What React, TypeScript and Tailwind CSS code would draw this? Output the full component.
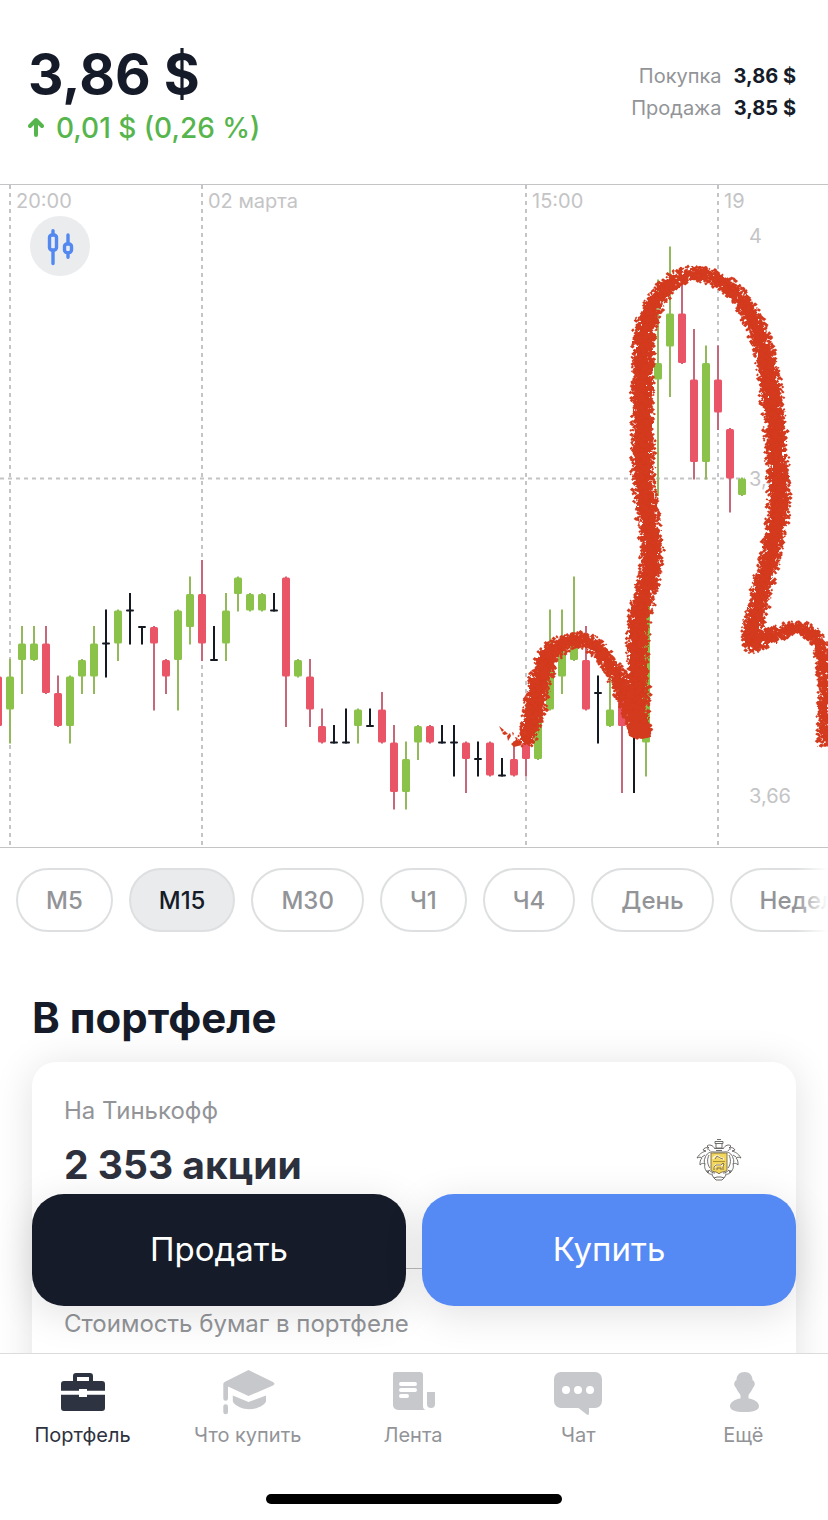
import React from 'react';

type Tone = 'up' | 'down' | 'flat';

interface Candle {
  tone: Tone;
  high: number;
  open: number;
  close: number;
  low: number;
}

// Levels are counted in cents below 4,00 $
const CANDLES: Candle[] = (
  [
    ['down', 27, 27, 30, 30],
    ['up', 26, 27, 29, 31],
    ['up', 24, 25, 26, 28],
    ['up', 24, 25, 26, 26],
    ['down', 24, 25, 28, 28],
    ['down', 27, 28, 30, 30],
    ['up', 27, 27, 30, 31],
    ['up', 26, 26, 27, 28],
    ['up', 24, 25, 27, 28],
    ['flat', 23, 25, 25, 27],
    ['up', 23, 23, 25, 26],
    ['flat', 22, 23, 23, 25],
    ['flat', 24, 24, 24, 25],
    ['down', 24, 24, 25, 29],
    ['down', 26, 26, 27, 28],
    ['up', 23, 23, 26, 29],
    ['up', 21, 22, 24, 25],
    ['down', 20, 22, 25, 26],
    ['flat', 24, 26, 26, 26],
    ['up', 22, 23, 25, 26],
    ['up', 21, 21, 22, 23],
    ['up', 22, 22, 23, 23],
    ['up', 22, 22, 23, 23],
    ['flat', 22, 23, 23, 23],
    ['down', 21, 21, 27, 30],
    ['up', 26, 26, 27, 27],
    ['down', 26, 27, 29, 30],
    ['down', 29, 30, 31, 31],
    ['flat', 30, 31, 31, 31],
    ['flat', 29, 31, 31, 31],
    ['up', 29, 29, 30, 31],
    ['flat', 29, 30, 30, 30],
    ['down', 28, 29, 31, 31],
    ['down', 30, 31, 34, 35],
    ['up', 31, 32, 34, 35],
    ['up', 30, 30, 31, 32],
    ['down', 30, 30, 31, 31],
    ['flat', 30, 31, 31, 31],
    ['flat', 30, 31, 31, 33],
    ['down', 31, 31, 32, 34],
    ['flat', 31, 32, 32, 33],
    ['down', 31, 31, 33, 33],
    ['flat', 32, 33, 33, 33],
    ['down', 31, 32, 33, 33],
    ['down', 31, 31, 32, 33],
    ['up', 29, 29, 32, 32],
    ['up', 23, 26, 29, 29],
    ['up', 23, 25, 27, 28],
    ['up', 21, 25, 26, 26],
    ['down', 24, 26, 29, 29],
    ['flat', 27, 28, 28, 31],
    ['up', 27, 29, 30, 30],
    ['down', 28, 28, 30, 34],
    ['flat', 28, 29, 29, 34],
    ['up', 22, 22, 31, 33],
    ['up', 3, 8, 9, 16],
    ['up', 1, 5, 7, 10],
    ['down', 3, 5, 8, 8],
    ['down', 6, 9, 14, 15],
    ['up', 7, 8, 14, 15],
    ['down', 7, 9, 11, 12],
    ['down', 12, 12, 15, 17],
    ['up', 15, 15, 16, 16],
  ] as [Tone, number, number, number, number][]
).map(([tone, high, open, close, low]) => ({ tone, high, open, close, low }));

const BODY: Record<Tone, string> = { up: '#8bc34a', down: '#ea5467', flat: '#151922' };
const WICK: Record<Tone, string> = { up: '#93b95c', down: '#c4687a', flat: '#151922' };

const levelY = (level: number) => 46 + level * 16.5;

// x, y and half width of the chalk line
const CHALK: [number, number, number][] = [
  [526, 555, 10], [531, 541, 11], [535, 524, 12], [539, 500, 12], [546, 476, 12], [558, 462, 10],
  [577, 455, 8], [593, 460, 9], [604, 472, 9], [617, 492, 10], [630, 520, 12], [640, 544, 11],
  [637, 518, 13], [638, 480, 12], [638, 448, 12], [641, 424, 12], [649, 393, 12], [652, 366, 12],
  [649, 340, 12], [644, 300, 12], [643, 260, 12], [643, 212, 12], [643, 163, 12], [650, 128, 11],
  [666, 103, 10], [687, 90, 8], [707, 91, 8], [730, 103, 9], [748, 126, 10], [762, 160, 11],
  [771, 205, 12], [777, 270, 12], [778, 325, 12], [770, 372, 11], [759, 414, 11], [752, 448, 11],
  [752, 459, 10], [762, 455, 9], [778, 448, 8], [799, 443, 7], [812, 449, 8], [821, 466, 8],
  [825, 500, 8], [824, 530, 7], [824, 558, 7],
];

const buildChalk = () => {
  let seed = 7;
  const rand = () => {
    seed = (seed * 16807) % 2147483647;
    return seed / 2147483647;
  };
  let grains = '';
  const rings: { x: number; y: number; r: number }[] = [];
  for (let i = 0; i < CHALK.length - 1; i++) {
    const p0 = CHALK[Math.max(0, i - 1)];
    const p1 = CHALK[i];
    const p2 = CHALK[i + 1];
    const p3 = CHALK[Math.min(CHALK.length - 1, i + 2)];
    const steps = Math.ceil(Math.hypot(p2[0] - p1[0], p2[1] - p1[1]) / 2);
    for (let s = 0; s < steps; s++) {
      const t = s / steps;
      const at = (k: 0 | 1) =>
        0.5 * (2 * p1[k] + (p2[k] - p0[k]) * t + (2 * p0[k] - 5 * p1[k] + 4 * p2[k] - p3[k]) * t * t +
          (3 * p1[k] - p0[k] - 3 * p2[k] + p3[k]) * t * t * t);
      const x = at(0);
      const y = at(1);
      const r = p1[2] + (p2[2] - p1[2]) * t;
      rings.push({ x, y, r: r - 4 });
      for (let g = 0; g < 9; g++) {
        const angle = rand() * Math.PI * 2;
        const dist = r * (0.55 + rand() * 0.5);
        const gx = x + Math.cos(angle) * dist;
        const gy = y + Math.sin(angle) * dist;
        const size = 1 + rand() * 1.3;
        grains += `M${(gx - size).toFixed(1)} ${gy.toFixed(1)}l${size.toFixed(1)} ${(-size).toFixed(1)}l${(size * (0.5 + rand())).toFixed(1)} ${size.toFixed(1)}l${(-size).toFixed(1)} ${(size * 0.9).toFixed(1)}z`;
      }
    }
  }
  return { grains, rings };
};

const chalk = buildChalk();

const PriceChart: React.FC = () => (
  <svg className="block h-auto w-full" viewBox="0 0 828 662" role="img" aria-label="График цены">
    <defs>
      <filter id="rough" x="-5%" y="-5%" width="110%" height="110%">
        <feTurbulence type="fractalNoise" baseFrequency="0.2" numOctaves="3" seed="4" result="noise" />
        <feDisplacementMap in="SourceGraphic" in2="noise" scale="14" xChannelSelector="R" yChannelSelector="G" />
      </filter>
    </defs>

    <g stroke="#c4c4c6" strokeWidth="2" strokeDasharray="4 4">
      {[10, 202, 526, 718].map(x => (
        <line key={x} x1={x} x2={x} y1="0" y2="662" />
      ))}
      <line x1="0" x2="745" y1="293.5" y2="293.5" />
    </g>

    <g fill="#c4c4c6" fontSize="20" fontFamily="Inter, sans-serif">
      <text x="16" y="23">20:00</text>
      <text x="208" y="23">02 марта</text>
      <text x="532" y="23">15:00</text>
      <text x="724" y="23">19</text>
      <text x="749" y="58">4</text>
      <text x="749" y="301">3,85</text>
      <text x="749" y="618">3,66</text>
    </g>

    {CANDLES.map((c, i) => {
      const x = i * 12 - 2;
      const flat = c.tone === 'flat';
      return (
        <g key={i}>
          {c.low > c.high && (
            <line x1={x} x2={x} y1={levelY(c.high) - 1} y2={levelY(c.low) + 1} stroke={WICK[c.tone]} strokeWidth="2" />
          )}
          <rect
            x={x - 4}
            y={levelY(c.open) + (flat ? -1 : 0)}
            width="8"
            height={flat ? 2 : levelY(c.close) - levelY(c.open)}
            rx={flat ? 1 : 1.5}
            fill={BODY[c.tone]}
          />
        </g>
      );
    })}

    {/* Hand-drawn forecast */}
    <g fill="#d43a1e">
      <g filter="url(#rough)">
        {chalk.rings.map((p, i) => (
          <circle key={i} cx={p.x} cy={p.y} r={p.r} />
        ))}
      </g>
      <path d={chalk.grains} />
      <path d="M499 541l5 4-2 2zM502 548l3-2 3 3-4 1zM507 551l3-3 1 3-3 5zM512 547l2 1-1 3zM511 559l6-5 5 6-8 2zM515 552l3 1-2 2zM627 540l22-2 2 14-9 2-13-3z" />
    </g>
  </svg>
);

const CandlesIcon: React.FC = () => (
  <svg className="h-15 w-15" viewBox="0 0 60 60" fill="none" stroke="#5388f0" strokeWidth="3.4" strokeLinecap="round" aria-hidden="true">
    <rect x="19.5" y="19" width="7" height="15" rx="2.5" />
    <path d="M23 14.8v4M23 34.500v13" />
    <rect x="34.500" y="28" width="7" height="8.600" rx="2.500" />
    <path d="M38 19v8.500M38 37v4.300" />
  </svg>
);

const PERIODS = ['М5', 'М15', 'М30', 'Ч1', 'Ч4', 'День', 'Неделя'];

const Crest: React.FC = () => (
  <svg className="h-[46px] w-12" viewBox="0 0 48 46" fill="none" stroke="#605e5a" strokeWidth="0.9" aria-hidden="true">
    <path d="M21 2.500h4M19 4.500h8v2h-8zM20 7v4h6V7M19 11.500h8M20 13.500h6M18 15h10" />
    {[false, true].map(flip => (
      <g key={String(flip)} transform={flip ? 'translate(46 0) scale(-1 1)' : undefined}>
        <path d="M19 12c-2-4-6-5-8-3l2 2c-3-1-5 0-6 2l3 1c-3 1-6 2-9 7 2-1 4-1 5 0-2 2-2 4-2 7 2-2 3-2 5-1-1 3 0 6 3 9l1-3c2 2 4 3 6 3" />
        <path d="M18 15c-4-1-8 2-9 6M14 14c-1-2-2-2-3-2M13 18c-2 4-2 9 1 13M9 21c-1 2-1 4 0 6M6 20l3-2M11 33c0 3 3 5 6 4" />
      </g>
    ))}
    <path d="M15 16h16v17c0 2-6 1-8 4-2-3-8-2-8-4z" fill="#f3d65e" stroke="#776a42" />
    <path d="M17 24.500h12" stroke="#a28a35" />
    <path d="M17 22c1-3 3-3 5-3l2 2 4 1" stroke="#fff6cf" strokeWidth="2" />
    <path d="M18 31l2-3h5l3 1" stroke="#fff6cf" strokeWidth="2" />
    <path d="M18 33v-3l2-2h5l2-2 1 1-1 3v3M21 33v-2h4v2M19 22l2-3 3 2 3 1" stroke="#77684b" />
    <path d="M16 38l2 3 3-1h4l3 1 2-3M18 41l2 2h6l2-2" />
  </svg>
);

const BriefcaseIcon = () => (
  <path
    fillRule="evenodd"
    d="M22 13V8a3 3 0 0 1 3-3h14a3 3 0 0 1 3 3v5h9a3 3 0 0 1 3 3v6.700H36V21h-8v1.700H10V16a3 3 0 0 1 3-3zm4 0h12V9H26zM10 26.700h18V29h8v-2.300h18V40a3 3 0 0 1-3 3H13a3 3 0 0 1-3-3z"
  />
);

const CapIcon = () => (
  <>
    <path d="M32.500 2 57 14q3 1.800 0 3.500L32.500 28 12 18.500V30.500a2.300 2.300 0 0 1-4.700 0V16q0-1.500 1.700-2.300z" />
    <rect x="7.300" y="36.200" width="4.700" height="10" rx="2.300" />
    <path d="M16.800 27.500 32.500 34 50 27.500V33c0 3-8 8.300-16.600 8.300S16.800 36 16.800 33z" />
  </>
);

const FeedIcon = () => (
  <>
    <path
      fillRule="evenodd"
      d="M14 4h25a3 3 0 0 1 3 3v31q0 4 3.500 4H17a5 5 0 0 1-5-5V6a2 2 0 0 1 2-2zm6 10a2 2 0 0 0 0 4h14a2 2 0 0 0 0-4zm0 6a2 2 0 0 0 0 4h14a2 2 0 0 0 0-4zm0 6a2 2 0 0 0 0 4h6a2 2 0 0 0 0-4z"
    />
    <path d="M46 24h8v12a4 4 0 0 1-8 0z" />
  </>
);

const ChatIcon = () => (
  <path
    fillRule="evenodd"
    d="M15 4h34a7 7 0 0 1 7 7v22a7 7 0 0 1-7 7h-6v5q0 3-2.500 1.200L32.500 40H15a7 7 0 0 1-7-7V11a7 7 0 0 1 7-7zm5 14a4 4 0 1 0 0 8 4 4 0 0 0 0-8zm12 0a4 4 0 1 0 0 8 4 4 0 0 0 0-8zm12 0a4 4 0 1 0 0 8 4 4 0 0 0 0-8z"
  />
);

const PersonIcon = () => (
  <path d="M33.500 4c5 0 8 3.500 8 8 2.800 1.500 3 5.500.6 7.500-1 3-3 5-4.600 7.500V30.500c6 .5 10.500 4 10.500 7.500 0 4-5 6-14.500 6S19 42 19 38c0-3.500 4.500-7 10.500-7.500V27c-1.600-2.500-3.600-4.500-4.600-7.500-2.400-2-2.200-6 .6-7.500 0-4.500 3-8 8-8z" />
);

const TABS = [
  { label: 'Портфель', icon: <BriefcaseIcon />, active: true },
  { label: 'Что купить', icon: <CapIcon /> },
  { label: 'Лента', icon: <FeedIcon /> },
  { label: 'Чат', icon: <ChatIcon /> },
  { label: 'Ещё', icon: <PersonIcon /> },
];

const App: React.FC = () => (
  <div className="flex h-screen flex-col overflow-hidden bg-white font-['Inter',sans-serif] text-[#151b28]">
    <div className="relative min-h-0 flex-1 overflow-hidden">
      <header className="flex h-46 items-start justify-between pt-11 pr-8 pl-7">
        <div>
          <h1 className="text-[55px] leading-[60px] font-bold">3,86 $</h1>
          <p className="mt-2 flex items-center gap-3 text-[28px] leading-8 font-medium text-[#56b54c]">
            <svg className="h-6 w-4" viewBox="0 0 16 24" fill="none" stroke="currentColor" strokeWidth="4" strokeLinecap="round" strokeLinejoin="round" aria-hidden="true">
              <path d="M8 19V4M2 10l6-6 6 6" />
            </svg>
            0,01 $ (0,26 %)
          </p>
        </div>
        <dl className="grid grid-cols-[auto_auto] gap-x-3 pt-4 text-right text-[20px] leading-8">
          <dt className="text-[#929498]">Покупка</dt>
          <dd className="font-bold">3,86 $</dd>
          <dt className="text-[#929498]">Продажа</dt>
          <dd className="font-bold">3,85 $</dd>
        </dl>
      </header>

      <section className="relative border-y border-[#c4c4c6]">
        <PriceChart />
        <button type="button" aria-label="Тип графика" className="absolute top-[31px] left-[30px] h-15 w-15 rounded-full bg-[#ebeced]">
          <CandlesIcon />
        </button>
      </section>

      <div className="relative">
        <div className="flex gap-4 overflow-hidden px-4 py-5">
          {PERIODS.map(period => (
            <button
              key={period}
              type="button"
              aria-pressed={period === 'М15'}
              className={`h-16 shrink-0 rounded-full border-2 px-7 pt-[2px] text-[24px] leading-8 font-medium ${
                period === 'М15' ? 'border-[#dddfe0] bg-[#e9ebec] text-[#151b28]' : 'border-[#dddfe0] text-[#929498]'
              }`}
            >
              {period}
            </button>
          ))}
        </div>
        <div className="pointer-events-none absolute inset-y-0 right-0 w-8 bg-linear-to-r from-white/0 to-white" />
      </div>

      <section className="px-8 pt-10">
        <h2 className="text-[42px] leading-[52px] font-bold">В портфеле</h2>
        <div className="mt-[18px] rounded-3xl bg-white px-8 pt-[33px] shadow-[0_4px_40px_rgba(0,0,0,0.12)]">
          <div className="flex items-end justify-between pr-5">
            <div>
              <p className="text-[24px] leading-8 text-[#929498]">На Тинькофф</p>
              <p className="mt-3 text-[39px] leading-[52px] font-bold text-[#2d313e]">2 353 акции</p>
            </div>
            <div className="pb-2">
              <Crest />
            </div>
          </div>
          <div className="mt-[77px] border-t border-[#bcbdbf] pt-[39px] pb-16">
            <p className="text-[24px] leading-8 text-[#929498]">Стоимость бумаг в портфеле</p>
          </div>
        </div>
      </section>

      <div className="absolute inset-x-8 bottom-[47px] flex gap-4 text-[33px] text-white">
        <button type="button" className="h-28 flex-1 rounded-[32px] bg-[#151b28] shadow-[0_8px_40px_rgba(0,0,0,0.12)]">
          Продать
        </button>
        <button type="button" className="h-28 flex-1 rounded-[32px] bg-[#5589f4] shadow-[0_8px_40px_rgba(0,0,0,0.12)]">
          Купить
        </button>
      </div>
    </div>

    <footer className="relative border-t border-[#dcdcde] bg-white pb-4">
      <nav className="grid grid-cols-5 pt-[14px] pr-[2px]">
        {TABS.map(tab => (
          <a
            key={tab.label}
            href="#"
            aria-current={tab.active ? 'page' : undefined}
            className={`flex flex-col items-center gap-[3px] ${tab.active ? 'text-[#2d323f]' : 'text-[#929498]'}`}
          >
            <svg className="h-12 w-16" viewBox="0 0 64 48" fill={tab.active ? '#2d3340' : '#c6c8cb'} aria-hidden="true">
              {tab.icon}
            </svg>
            <span className="text-[20px] leading-8">{tab.label}</span>
          </a>
        ))}
      </nav>
      <div className="mx-auto mt-[43px] h-[10px] w-[296px] rounded-full bg-black" />
    </footer>
  </div>
);

export default App;
